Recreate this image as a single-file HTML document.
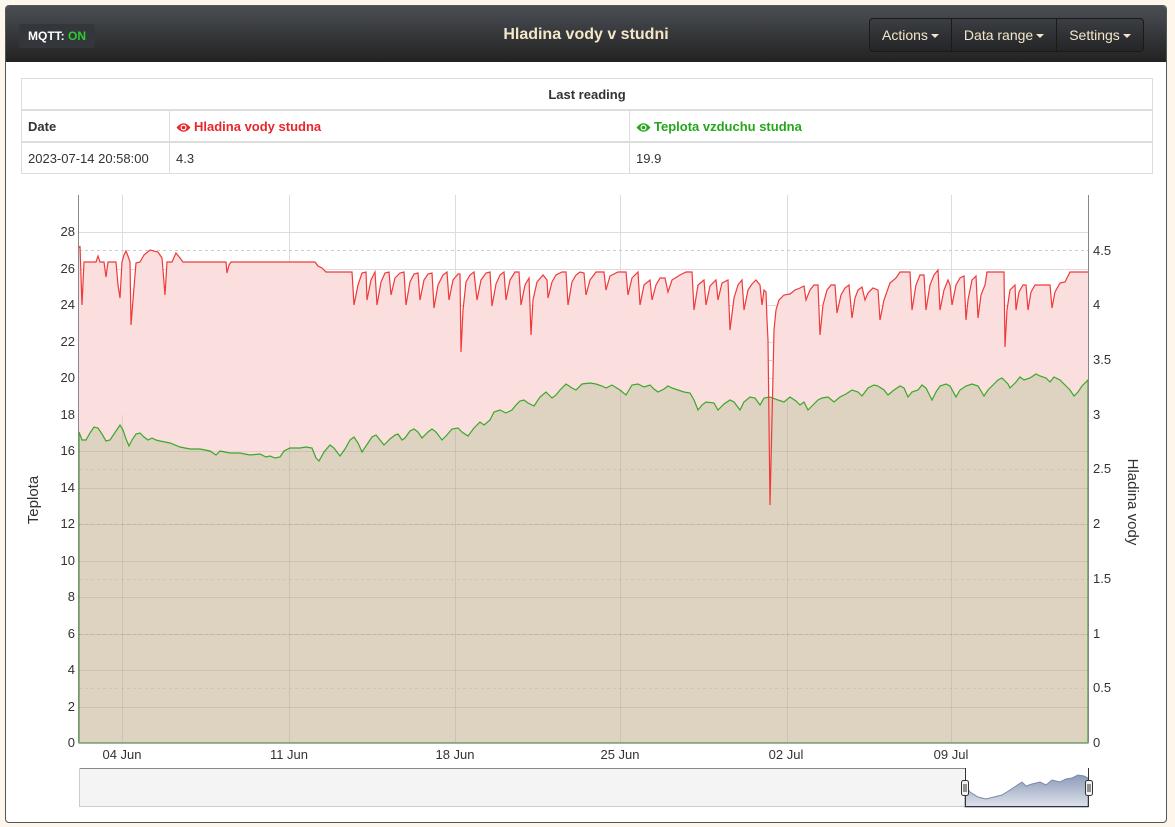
<!DOCTYPE html>
<html><head><meta charset="utf-8"><style>
body{margin:0;background:#fdf6ea;font-family:"Liberation Sans",sans-serif;width:1175px;height:827px;overflow:hidden;position:relative}
.wrap{position:absolute;left:5px;top:5px;width:1162px;height:818px;background:#fff;border:1px solid #555;border-radius:4px;box-sizing:border-box;overflow:hidden}
.nav{position:absolute;left:0;top:0;width:100%;height:56px;background:linear-gradient(#4a4e54,#222);}
.mqtt{position:absolute;left:13px;top:18px;width:76px;height:24px;background:#33373b;border-radius:3px;color:#fff;font-weight:bold;font-size:12px;line-height:24px;text-align:center}
.mqtt b{color:#2ecc2e}
.title{position:absolute;left:0;width:100%;top:20px;text-align:center;color:#f5e6c8;font-weight:bold;font-size:16px}
.btns{position:absolute;left:863px;top:12px;height:32px;border:1px solid #1a1a1a;border-radius:4px;display:flex;background:linear-gradient(#3b3e42,#232527)}
.btns div{color:#f5e6c8;font-size:14px;line-height:32px;padding:0 12px;border-left:1px solid #1a1a1a}
.btns div:first-child{border-left:none}
.car{display:inline-block;border-left:4px solid transparent;border-right:4px solid transparent;border-top:4px solid #f5e6c8;vertical-align:middle;margin-left:3px}
table{position:absolute;left:15px;top:72px;width:1132px;border-collapse:collapse;font-size:13px;color:#333}
td{border:1px solid #ddd;padding:0 6px;height:30px}
.r{color:#e8262b;font-weight:bold}.g{color:#25a71a;font-weight:bold}
.r svg,.g svg{vertical-align:-2px;margin-right:3px}
svg text{font-family:"Liberation Sans",sans-serif;font-size:13px;fill:#333}
</style></head><body>
<div class="wrap">
<div class="nav"><div class="mqtt">MQTT: <b>ON</b></div><div class="title">Hladina vody v studni</div>
<div class="btns"><div>Actions<span class="car"></span></div><div>Data range<span class="car"></span></div><div>Settings<span class="car"></span></div></div></div>
<table>
<tr><td colspan="3" style="text-align:center;font-weight:bold">Last reading</td></tr>
<tr style="border-top:2px solid #ddd"><td style="width:135px;font-weight:bold">Date</td><td class="r" style="width:447px"><svg width="15" height="11" viewBox="0 0 15 11"><path d="M0.5,5.5 Q7.5,-3 14.5,5.5 Q7.5,14 0.5,5.5Z" fill="#e8262b"/><circle cx="7.5" cy="5.5" r="3" fill="#fff"/><circle cx="7.5" cy="5.5" r="1.8" fill="#e8262b"/></svg>Hladina vody studna</td><td class="g"><svg width="15" height="11" viewBox="0 0 15 11"><path d="M0.5,5.5 Q7.5,-3 14.5,5.5 Q7.5,14 0.5,5.5Z" fill="#25a71a"/><circle cx="7.5" cy="5.5" r="3" fill="#fff"/><circle cx="7.5" cy="5.5" r="1.8" fill="#25a71a"/></svg>Teplota vzduchu studna</td></tr>
<tr style="border-top:2px solid #ddd"><td>2023-07-14 20:58:00</td><td>4.3</td><td>19.9</td></tr>
</table>
</div>
<svg style="position:absolute;left:0;top:0" width="1175" height="827">
<defs><path id="rp" d="M79,248 80,246 82,305 84,262 96,262 98,256 100,262 104,262 106,277 108,262 116,262 118,285 120,298 122,262 124,255 126,251 128,256 130,262 131,325 133,300 136,263 140,262 144,255 150,250 158,252 162,258 165,295 167,262 172,262 176,253 180,258 183,262 226,262 227,273 229,265 231,262 315,262 318,266 322,268 326,272 352,272 354,305 358,285 362,273 366,272 367,300 371,280 375,272 377,305 381,282 385,273 389,272 391,295 395,278 400,273 404,272 406,305 410,282 414,274 418,273 420,300 424,280 428,274 432,273 434,308 438,285 443,275 447,272 449,300 453,280 458,274 460,274 461,352 463,310 466,282 470,275 474,272 477,300 481,280 486,273 490,272 492,306 496,284 500,275 504,272 506,300 510,280 515,272 519,272 521,305 525,285 529,278 531,335 533,300 537,282 543,275 547,280 548,298 552,282 556,275 562,272 566,272 568,305 572,282 576,275 580,272 584,273 586,295 590,280 596,272 604,272 606,290 610,276 618,272 626,272 628,295 632,278 638,272 640,305 644,285 650,280 652,300 656,285 660,278 665,278 668,292 672,280 680,275 686,272 692,272 694,310 698,285 704,280 706,305 710,286 716,280 718,300 722,283 728,280 730,330 734,298 738,285 742,280 744,310 748,290 752,284 756,280 760,285 762,305 764,290 766,292 767,320 768,340 770,505 772,420 774,330 776,310 779,300 784,295 790,294 795,290 800,288 804,286 806,300 810,290 814,285 818,285 820,335 823,305 827,290 831,285 835,285 837,313 841,295 845,288 849,285 852,318 855,298 858,290 862,287 865,300 868,293 873,288 878,290 880,320 884,300 890,283 896,278 900,272 910,272 912,310 916,285 920,275 924,275 926,310 930,285 934,275 938,270 940,310 944,290 948,280 950,285 952,305 956,285 960,278 964,276 966,320 968,300 972,280 976,276 978,318 981,295 985,285 987,272 1004,272 1005,347 1007,310 1010,290 1015,285 1016,310 1019,292 1023,285 1026,285 1028,310 1031,292 1035,285 1045,285 1050,285 1052,308 1055,292 1060,283 1065,282 1070,272 1088,272"/></defs>
<g stroke="#ddd" stroke-width="1">
<line x1="79" x2="1088" y1="232.5" y2="232.5"/><line x1="79" x2="1088" y1="269.5" y2="269.5"/><line x1="79" x2="1088" y1="305.5" y2="305.5"/><line x1="79" x2="1088" y1="342.5" y2="342.5"/><line x1="79" x2="1088" y1="378.5" y2="378.5"/><line x1="79" x2="1088" y1="415.5" y2="415.5"/>
<line y1="195" y2="743" x1="122.5" x2="122.5"/><line y1="195" y2="743" x1="289.5" x2="289.5"/><line y1="195" y2="743" x1="455.5" x2="455.5"/><line y1="195" y2="743" x1="620.5" x2="620.5"/><line y1="195" y2="743" x1="787.5" x2="787.5"/><line y1="195" y2="743" x1="951.5" x2="951.5"/>
</g>
<g stroke="#ccc" stroke-dasharray="3,3"><line x1="79" x2="1088" y1="250.5" y2="250.5"/><line x1="79" x2="1088" y1="360.5" y2="360.5"/></g>
<path fill="#fbdede" d="M79,743 L79,248 L1088,272 L1088,743 Z" style="display:none"/>
<path fill="#fbdede" stroke="none" d="M79,743 L79,248 80,246 82,305 84,262 96,262 98,256 100,262 104,262 106,277 108,262 116,262 118,285 120,298 122,262 124,255 126,251 128,256 130,262 131,325 133,300 136,263 140,262 144,255 150,250 158,252 162,258 165,295 167,262 172,262 176,253 180,258 183,262 226,262 227,273 229,265 231,262 315,262 318,266 322,268 326,272 352,272 354,305 358,285 362,273 366,272 367,300 371,280 375,272 377,305 381,282 385,273 389,272 391,295 395,278 400,273 404,272 406,305 410,282 414,274 418,273 420,300 424,280 428,274 432,273 434,308 438,285 443,275 447,272 449,300 453,280 458,274 460,274 461,352 463,310 466,282 470,275 474,272 477,300 481,280 486,273 490,272 492,306 496,284 500,275 504,272 506,300 510,280 515,272 519,272 521,305 525,285 529,278 531,335 533,300 537,282 543,275 547,280 548,298 552,282 556,275 562,272 566,272 568,305 572,282 576,275 580,272 584,273 586,295 590,280 596,272 604,272 606,290 610,276 618,272 626,272 628,295 632,278 638,272 640,305 644,285 650,280 652,300 656,285 660,278 665,278 668,292 672,280 680,275 686,272 692,272 694,310 698,285 704,280 706,305 710,286 716,280 718,300 722,283 728,280 730,330 734,298 738,285 742,280 744,310 748,290 752,284 756,280 760,285 762,305 764,290 766,292 767,320 768,340 770,505 772,420 774,330 776,310 779,300 784,295 790,294 795,290 800,288 804,286 806,300 810,290 814,285 818,285 820,335 823,305 827,290 831,285 835,285 837,313 841,295 845,288 849,285 852,318 855,298 858,290 862,287 865,300 868,293 873,288 878,290 880,320 884,300 890,283 896,278 900,272 910,272 912,310 916,285 920,275 924,275 926,310 930,285 934,275 938,270 940,310 944,290 948,280 950,285 952,305 956,285 960,278 964,276 966,320 968,300 972,280 976,276 978,318 981,295 985,285 987,272 1004,272 1005,347 1007,310 1010,290 1015,285 1016,310 1019,292 1023,285 1026,285 1028,310 1031,292 1035,285 1045,285 1050,285 1052,308 1055,292 1060,283 1065,282 1070,272 1088,272 L1088,743 Z"/>
<path fill="#ddd3c0" stroke="#3aa82a" stroke-width="1.2" d="M79,743 L79,432 82,440 86,440 90,433 94,427 98,428 102,434 106,441 110,440 114,434 118,428 120,425 123,430 126,439 129,446 132,440 136,434 140,433 144,437 148,440 152,438 156,440 160,441 170,443 180,447 190,449 200,449 210,451 216,455 220,451 230,453 240,453 250,455 260,454 266,457 270,456 275,458 280,457 284,451 290,448 300,448 306,447 312,448 316,458 319,461 324,452 330,445 334,448 337,452 340,456 345,449 350,440 354,437 358,443 362,452 366,446 372,437 376,435 380,440 384,445 390,439 395,435 398,434 402,440 405,438 410,431 414,429 418,432 422,438 428,432 432,429 436,432 442,440 446,436 452,429 458,428 462,432 468,436 474,428 480,422 484,425 490,420 494,412 500,410 506,413 512,410 516,405 520,401 524,400 528,403 534,406 540,397 546,392 552,398 556,395 560,390 566,384 572,388 576,390 582,384 590,383 596,384 602,386 606,388 612,385 620,390 626,395 632,385 638,384 644,387 650,385 654,389 658,392 664,389 668,386 672,388 678,390 684,392 690,393 694,400 698,410 702,405 706,402 714,403 718,410 724,404 730,400 734,402 740,410 744,402 750,397 755,398 760,405 764,398 770,397 778,400 784,402 790,397 796,401 800,405 804,402 808,410 812,406 818,400 822,398 828,397 834,402 840,397 846,394 852,390 858,392 862,396 868,388 874,385 878,386 884,390 888,395 894,390 900,386 904,388 908,397 912,392 918,390 922,385 926,388 932,400 936,392 940,386 946,384 950,386 956,397 960,390 966,386 972,384 978,386 984,396 988,390 994,384 998,380 1002,378 1008,384 1010,388 1016,382 1020,377 1024,380 1030,378 1036,374 1040,376 1046,378 1050,382 1054,377 1060,380 1066,386 1070,390 1074,396 1078,392 1082,386 1088,380 L1088,743 Z"/>
<g stroke="rgba(0,0,0,0.08)"><line x1="79" x2="1088" y1="451.5" y2="451.5"/><line x1="79" x2="1088" y1="488.5" y2="488.5"/><line x1="79" x2="1088" y1="524.5" y2="524.5"/><line x1="79" x2="1088" y1="561.5" y2="561.5"/><line x1="79" x2="1088" y1="597.5" y2="597.5"/><line x1="79" x2="1088" y1="634.5" y2="634.5"/><line x1="79" x2="1088" y1="670.5" y2="670.5"/><line x1="79" x2="1088" y1="707.5" y2="707.5"/>
<line y1="415" y2="743" x1="122.5" x2="122.5"/><line y1="440" y2="743" x1="289.5" x2="289.5"/><line y1="430" y2="743" x1="455.5" x2="455.5"/><line y1="390" y2="743" x1="620.5" x2="620.5"/><line y1="400" y2="743" x1="787.5" x2="787.5"/><line y1="390" y2="743" x1="951.5" x2="951.5"/></g>
<g stroke="rgba(0,0,0,0.06)" stroke-dasharray="3,3"><line x1="79" x2="1088" y1="469.5" y2="469.5"/><line x1="79" x2="1088" y1="524.5" y2="524.5"/><line x1="79" x2="1088" y1="579.5" y2="579.5"/><line x1="79" x2="1088" y1="634.5" y2="634.5"/><line x1="79" x2="1088" y1="688.5" y2="688.5"/></g>
<use href="#rp" fill="none" stroke="#f03a3a" stroke-width="1.2"/>
<line x1="78.5" x2="78.5" y1="195" y2="743" stroke="#888"/><line x1="1088.5" x2="1088.5" y1="195" y2="743" stroke="#888"/><line x1="78" x2="1089" y1="742.5" y2="742.5" stroke="#999"/>
<g text-anchor="end">
<text x="75" y="747">0</text><text x="75" y="711">2</text><text x="75" y="674">4</text><text x="75" y="638">6</text><text x="75" y="601">8</text><text x="75" y="565">10</text><text x="75" y="528">12</text><text x="75" y="492">14</text><text x="75" y="455">16</text><text x="75" y="419">18</text><text x="75" y="382">20</text><text x="75" y="346">22</text><text x="75" y="309">24</text><text x="75" y="273">26</text><text x="75" y="236">28</text></g>
<g><text x="1093" y="747">0</text><text x="1093" y="692">0.5</text><text x="1093" y="638">1</text><text x="1093" y="583">1.5</text><text x="1093" y="528">2</text><text x="1093" y="473">2.5</text><text x="1093" y="419">3</text><text x="1093" y="364">3.5</text><text x="1093" y="309">4</text><text x="1093" y="255">4.5</text></g>
<g text-anchor="middle"><text x="122" y="759">04 Jun</text><text x="289" y="759">11 Jun</text><text x="455" y="759">18 Jun</text><text x="620" y="759">25 Jun</text><text x="786" y="759">02 Jul</text><text x="951" y="759">09 Jul</text></g>
<text transform="translate(38,500) rotate(-90)" text-anchor="middle" style="font-size:15px">Teplota</text>
<text transform="translate(1128,502) rotate(90)" text-anchor="middle" style="font-size:15px">Hladina vody</text>
<rect x="79" y="768" width="886" height="39" fill="#f4f4f4"/>
<line x1="79" x2="965" y1="768.5" y2="768.5" stroke="#888"/><line x1="79" x2="965" y1="806.5" y2="806.5" stroke="#ccc"/><line x1="79.5" x2="79.5" y1="768" y2="807" stroke="#ccc"/>
<defs><linearGradient id="ng" x1="0" y1="0" x2="0" y2="1"><stop offset="0" stop-color="#8c9bb8"/><stop offset="1" stop-color="#dfe3ec"/></linearGradient></defs>
<path fill="url(#ng)" stroke="#7a8aa8" d="M965,807 L965,785 970,792 978,797 986,799 994,797 1002,795 1010,790 1016,786 1022,782 1026,786 1032,784 1040,782 1046,785 1052,780 1060,782 1066,779 1072,778 1078,775 1084,776 1088,778 L1088,807 Z"/>
<line x1="965" x2="1088" y1="806.5" y2="806.5" stroke="#333"/><line x1="965.5" x2="965.5" y1="768" y2="807" stroke="#333"/><line x1="1088.5" x2="1088.5" y1="768" y2="807" stroke="#333"/>
<rect x="961.5" y="780.5" width="7" height="15" rx="2" fill="#f2f2f2" stroke="#333"/><line x1="964" x2="964" y1="784" y2="792" stroke="#333"/><line x1="966" x2="966" y1="784" y2="792" stroke="#333"/>
<rect x="1085.5" y="780.5" width="7" height="15" rx="2" fill="#f2f2f2" stroke="#333"/><line x1="1088" x2="1088" y1="784" y2="792" stroke="#333"/><line x1="1090" x2="1090" y1="784" y2="792" stroke="#333"/>
</svg>
</body></html>
